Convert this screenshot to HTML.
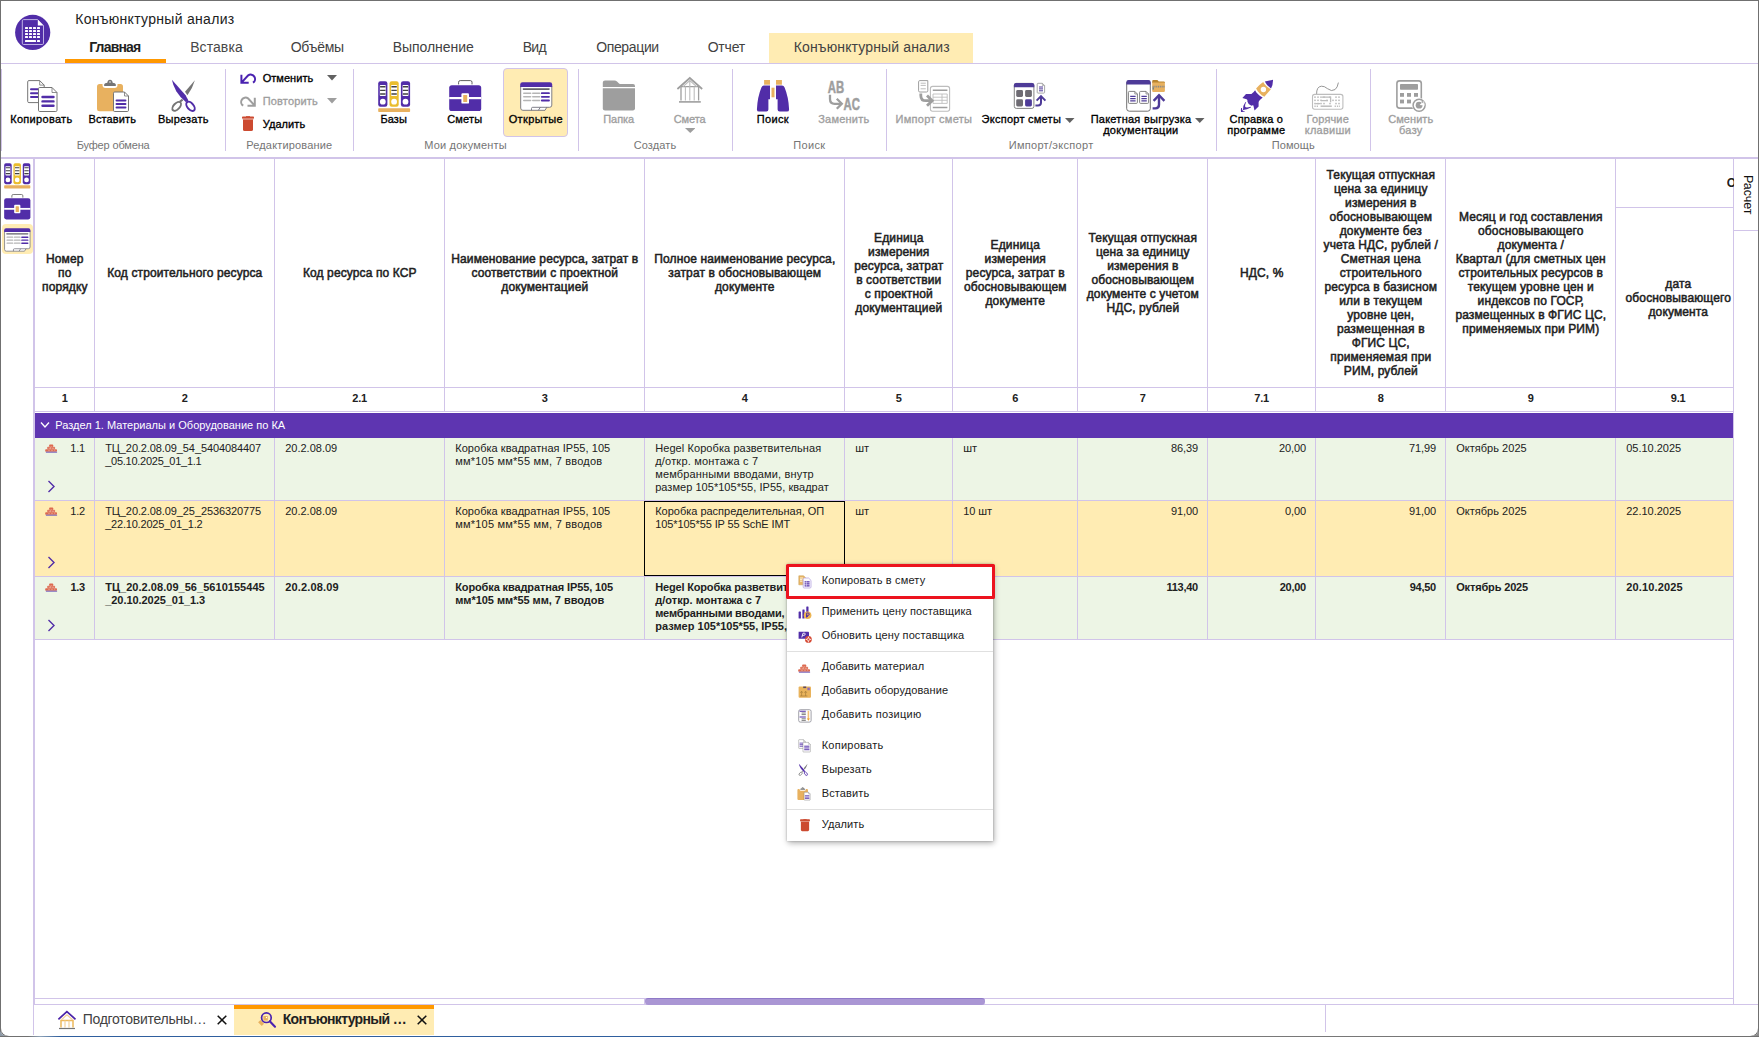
<!DOCTYPE html>
<html lang="ru"><head><meta charset="utf-8"><title>Конъюнктурный анализ</title><style>
html,body{margin:0;padding:0}
body{width:1759px;height:1037px;overflow:hidden;background:#fff;position:relative;font-family:"Liberation Sans",sans-serif;color:#212121}
.a{position:absolute}
.t{white-space:pre}
.hc{position:absolute;display:flex;align-items:center;justify-content:center;text-align:center;font-weight:400;-webkit-text-stroke:0.5px #212121;font-size:12px;line-height:14px;letter-spacing:0.12px;color:#212121;white-space:nowrap;padding-left:0.6px;box-sizing:border-box}
.c{position:absolute;font-size:11px;line-height:13px;white-space:nowrap;color:#212121}
.b{font-weight:700;letter-spacing:-0.2px}
</style></head><body>
<div class="a" style="left:0px;top:0px;width:1759px;height:1px;background:#707070"></div>
<div class="a" style="left:0px;top:0px;width:1px;height:1037px;background:#707070"></div>
<div class="a" style="left:1758px;top:0px;width:1px;height:1037px;background:#707070"></div>
<div class="a t" style="left:75.2px;top:10.15px;font-size:14px;line-height:18px;color:#212121;letter-spacing:0.297px;">Конъюнктурный анализ</div>
<div class="a" style="left:769px;top:33px;width:204px;height:30px;background:#FFECB3"></div>
<div class="a t" style="left:89.2px;top:38.15px;font-size:14px;line-height:18px;color:#212121;font-weight:700;letter-spacing:-0.823px;">Главная</div>
<div class="a t" style="left:190.2px;top:38.15px;font-size:14px;line-height:18px;color:#484848;letter-spacing:0.076px;">Вставка</div>
<div class="a t" style="left:290.7px;top:38.15px;font-size:14px;line-height:18px;color:#424242;letter-spacing:-0.234px;">Объёмы</div>
<div class="a t" style="left:392.7px;top:38.15px;font-size:14px;line-height:18px;color:#424242;letter-spacing:-0.054px;">Выполнение</div>
<div class="a t" style="left:522.7px;top:38.15px;font-size:14px;line-height:18px;color:#424242;letter-spacing:-0.664px;">Вид</div>
<div class="a t" style="left:596.2px;top:38.15px;font-size:14px;line-height:18px;color:#424242;letter-spacing:-0.357px;">Операции</div>
<div class="a t" style="left:707.7px;top:38.15px;font-size:14px;line-height:18px;color:#424242;letter-spacing:-0.211px;">Отчет</div>
<div class="a t" style="left:793.7px;top:38.15px;font-size:14px;line-height:18px;color:#424242;letter-spacing:0.139px;">Конъюнктурный анализ</div>
<div class="a" style="left:1px;top:63px;width:1757px;height:1px;background:#D1C4E9"></div>
<div class="a" style="left:65px;top:59px;width:101px;height:4px;background:#FF9800"></div>
<div class="a" style="left:1px;top:69px;width:1px;height:82px;background:#D1C4E9"></div>
<div class="a" style="left:225px;top:69px;width:1px;height:82px;background:#D1C4E9"></div>
<div class="a" style="left:353px;top:69px;width:1px;height:82px;background:#D1C4E9"></div>
<div class="a" style="left:578px;top:69px;width:1px;height:82px;background:#D1C4E9"></div>
<div class="a" style="left:732px;top:69px;width:1px;height:82px;background:#D1C4E9"></div>
<div class="a" style="left:886px;top:69px;width:1px;height:82px;background:#D1C4E9"></div>
<div class="a" style="left:1216px;top:69px;width:1px;height:82px;background:#D1C4E9"></div>
<div class="a" style="left:1370px;top:69px;width:1px;height:82px;background:#D1C4E9"></div>
<div class="a" style="left:1px;top:157px;width:1757px;height:2px;background:#D1C4E9"></div>
<div class="a t" style="left:10.2px;top:112.19px;font-size:11px;line-height:14px;color:#000;-webkit-text-stroke:0.32px #000;letter-spacing:0.307px;">Копировать</div>
<div class="a t" style="left:88.45px;top:112.19px;font-size:11px;line-height:14px;color:#000;-webkit-text-stroke:0.32px #000;letter-spacing:0.123px;">Вставить</div>
<div class="a t" style="left:157.95px;top:112.19px;font-size:11px;line-height:14px;color:#000;-webkit-text-stroke:0.32px #000;letter-spacing:0.223px;">Вырезать</div>
<div class="a t" style="left:76.7px;top:138.19px;font-size:11px;line-height:14px;color:#757575;letter-spacing:-0.159px;">Буфер обмена</div>
<div class="a t" style="left:262.7px;top:71.19px;font-size:11px;line-height:14px;color:#000;-webkit-text-stroke:0.32px #000;letter-spacing:0.033px;">Отменить</div>
<div class="a t" style="left:262.7px;top:94.19px;font-size:11px;line-height:14px;color:#9E9E9E;-webkit-text-stroke:0.32px #9E9E9E;letter-spacing:0.162px;">Повторить</div>
<div class="a t" style="left:262.7px;top:117.19px;font-size:11px;line-height:14px;color:#000;-webkit-text-stroke:0.32px #000;letter-spacing:0.083px;">Удалить</div>
<div class="a t" style="left:246.2px;top:138.19px;font-size:11px;line-height:14px;color:#757575;letter-spacing:0.169px;">Редактирование</div>
<div class="a" style="left:503px;top:68px;width:65px;height:68.6px;background:#FFECB3;border:1px solid #D1C4E9;border-radius:4px;box-sizing:border-box"></div>
<div class="a t" style="left:380.45px;top:112.19px;font-size:11px;line-height:14px;color:#000;-webkit-text-stroke:0.32px #000;letter-spacing:0.109px;">Базы</div>
<div class="a t" style="left:447.2px;top:112.19px;font-size:11px;line-height:14px;color:#000;-webkit-text-stroke:0.32px #000;letter-spacing:0.199px;">Сметы</div>
<div class="a t" style="left:508.7px;top:112.19px;font-size:11px;line-height:14px;color:#000;-webkit-text-stroke:0.32px #000;letter-spacing:0.357px;">Открытые</div>
<div class="a t" style="left:424.2px;top:138.19px;font-size:11px;line-height:14px;color:#757575;letter-spacing:0.195px;">Мои документы</div>
<div class="a t" style="left:603.2px;top:112.19px;font-size:11px;line-height:14px;color:#9E9E9E;-webkit-text-stroke:0.32px #9E9E9E;letter-spacing:-0.039px;">Папка</div>
<div class="a t" style="left:673.7px;top:112.19px;font-size:11px;line-height:14px;color:#9E9E9E;-webkit-text-stroke:0.32px #9E9E9E;letter-spacing:-0.074px;">Смета</div>
<div class="a t" style="left:633.7px;top:138.19px;font-size:11px;line-height:14px;color:#757575;letter-spacing:0.115px;">Создать</div>
<div class="a t" style="left:756.7px;top:112.19px;font-size:11px;line-height:14px;color:#000;-webkit-text-stroke:0.32px #000;letter-spacing:0.379px;">Поиск</div>
<div class="a t" style="left:818.2px;top:112.19px;font-size:11px;line-height:14px;color:#9E9E9E;-webkit-text-stroke:0.32px #9E9E9E;letter-spacing:0.223px;">Заменить</div>
<div class="a t" style="left:793.2px;top:138.19px;font-size:11px;line-height:14px;color:#757575;letter-spacing:0.379px;">Поиск</div>
<div class="a t" style="left:895.45px;top:112.19px;font-size:11px;line-height:14px;color:#9E9E9E;-webkit-text-stroke:0.32px #9E9E9E;letter-spacing:0.293px;">Импорт сметы</div>
<div class="a t" style="left:981.6px;top:112.19px;font-size:11px;line-height:14px;color:#000;-webkit-text-stroke:0.32px #000;letter-spacing:0.254px;">Экспорт сметы</div>
<div class="a t" style="left:1090.65px;top:112.19px;font-size:11px;line-height:14px;color:#000;-webkit-text-stroke:0.32px #000;letter-spacing:0.254px;">Пакетная выгрузка</div>
<div class="a t" style="left:1103.2px;top:123.19px;font-size:11px;line-height:14px;color:#000;-webkit-text-stroke:0.32px #000;letter-spacing:0.251px;">документации</div>
<div class="a t" style="left:1008.7px;top:138.19px;font-size:11px;line-height:14px;color:#757575;letter-spacing:0.303px;">Импорт/экспорт</div>
<div class="a t" style="left:1229.6px;top:112.19px;font-size:11px;line-height:14px;color:#000;-webkit-text-stroke:0.32px #000;letter-spacing:0.109px;">Справка о</div>
<div class="a t" style="left:1227.2px;top:123.19px;font-size:11px;line-height:14px;color:#000;-webkit-text-stroke:0.32px #000;letter-spacing:0.289px;">программе</div>
<div class="a t" style="left:1306.6px;top:112.19px;font-size:11px;line-height:14px;color:#9E9E9E;-webkit-text-stroke:0.32px #9E9E9E;letter-spacing:0.151px;">Горячие</div>
<div class="a t" style="left:1304.7px;top:123.19px;font-size:11px;line-height:14px;color:#9E9E9E;-webkit-text-stroke:0.32px #9E9E9E;letter-spacing:0.260px;">клавиши</div>
<div class="a t" style="left:1271.7px;top:138.19px;font-size:11px;line-height:14px;color:#757575;letter-spacing:0.100px;">Помощь</div>
<div class="a t" style="left:1388.2px;top:112.19px;font-size:11px;line-height:14px;color:#9E9E9E;-webkit-text-stroke:0.32px #9E9E9E;letter-spacing:0.062px;">Сменить</div>
<div class="a t" style="left:1399.05px;top:123.19px;font-size:11px;line-height:14px;color:#9E9E9E;-webkit-text-stroke:0.32px #9E9E9E;letter-spacing:0.277px;">базу</div>
<svg class="a" style="left:327px;top:75px;" width="10" height="5.5" viewBox="0 0 10 5.5"><path d="M0 0H10L5.0 5.5Z" fill="#616161"/></svg>
<svg class="a" style="left:327px;top:98px;" width="10" height="5.5" viewBox="0 0 10 5.5"><path d="M0 0H10L5.0 5.5Z" fill="#9E9E9E"/></svg>
<svg class="a" style="left:684.5px;top:128px;" width="10.5" height="5" viewBox="0 0 10.5 5"><path d="M0 0H10.5L5.25 5Z" fill="#9E9E9E"/></svg>
<svg class="a" style="left:1065px;top:117.5px;" width="9.5" height="5" viewBox="0 0 9.5 5"><path d="M0 0H9.5L4.75 5Z" fill="#616161"/></svg>
<svg class="a" style="left:1195px;top:117.5px;" width="9.5" height="5" viewBox="0 0 9.5 5"><path d="M0 0H9.5L4.75 5Z" fill="#616161"/></svg>
<svg class="a" style="left:14px;top:14px;" width="38" height="38" viewBox="0 0 38 38"><circle cx="18.7" cy="18.4" r="17.6" fill="#512DA8"/>
<path d="M9.6 5.6H23.6L29.5 11.4V29.2Q29.5 30.5 28.2 30.5H9.6Q8.3 30.5 8.3 29.2V6.9Q8.3 5.6 9.6 5.6Z" fill="none" stroke="#BFB2E4" stroke-width="1" stroke-linejoin="round"/>
<path d="M23.8 5.8L29.4 11.4H23.8Z" fill="#fff"/>
<g fill="#fff"><rect x="11" y="13" width="3" height="2" rx="0.5"/><rect x="11" y="16" width="3" height="2" rx="0.5"/><rect x="11" y="19" width="3" height="2" rx="0.5"/><rect x="11" y="22" width="3" height="2" rx="0.5"/><rect x="15" y="13" width="3" height="2" rx="0.5"/><rect x="15" y="16" width="3" height="2" rx="0.5"/><rect x="15" y="19" width="3" height="2" rx="0.5"/><rect x="15" y="22" width="3" height="2" rx="0.5"/><rect x="19" y="13" width="3" height="2" rx="0.5"/><rect x="19" y="16" width="3" height="2" rx="0.5"/><rect x="19" y="19" width="3" height="2" rx="0.5"/><rect x="19" y="22" width="3" height="2" rx="0.5"/><rect x="23" y="13" width="3" height="2" rx="0.5"/><rect x="23" y="16" width="3" height="2" rx="0.5"/><rect x="23" y="19" width="3" height="2" rx="0.5"/><rect x="23" y="22" width="3" height="2" rx="0.5"/><rect x="11" y="26" width="11" height="2" rx="0.5"/><rect x="23" y="26" width="3" height="2" rx="0.5"/></g></svg>
<svg class="a" style="left:26px;top:79px;" width="34" height="35" viewBox="0 0 34 35"><path d="M2.9 1.6H13.7L18.2 6.1V22.400000000000002Q18.2 23.6 17.0 23.6H2.9Q1.7 23.6 1.7 22.400000000000002V2.8Q1.7 1.6 2.9 1.6Z" fill="#fff" stroke="#757575" stroke-width="1"/><path d="M13.7 1.6V6.1H18.2" fill="none" stroke="#757575" stroke-width="0.8"/><path d="M5 10.3H12M5 14.2H12M5 18.1H12" stroke="#512DA8" stroke-width="2" stroke-linecap="round"/><path d="M13.7 8.5H26.0L31.0 13.5V31.3Q31.0 32.5 29.8 32.5H13.7Q12.5 32.5 12.5 31.3V9.7Q12.5 8.5 13.7 8.5Z" fill="#fff" stroke="#757575" stroke-width="1"/><path d="M26.0 8.5V13.5H31.0" fill="none" stroke="#757575" stroke-width="0.8"/><path d="M16.5 18H27.5M16.5 22.4H27.5M16.5 26.8H27.5" stroke="#512DA8" stroke-width="2.4" stroke-linecap="round"/></svg>
<svg class="a" style="left:96px;top:79px;" width="34" height="35" viewBox="0 0 34 35"><rect x="1" y="5" width="26" height="27.2" rx="2.5" fill="#E8B15F"/>
<path d="M6.5 4.5H21.5V6Q21.5 9 18.5 9H9.5Q6.5 9 6.5 6Z" fill="#fff"/>
<path d="M8.2 6.9Q7.6 4.2 10.4 3.9L11.3 3.8Q11.7 0.8 14 0.8Q16.3 0.8 16.7 3.8L17.6 3.9Q20.4 4.2 19.8 6.9Z" fill="#757575"/><circle cx="14" cy="2.9" r="0.75" fill="#fff"/><path d="M18.7 13H28.5L32.5 17V31.3Q32.5 32.5 31.3 32.5H18.7Q17.5 32.5 17.5 31.3V14.2Q17.5 13 18.7 13Z" fill="#fff" stroke="#757575" stroke-width="1"/><path d="M28.5 13V17H32.5" fill="none" stroke="#757575" stroke-width="0.8"/><path d="M20.5 21.5H29.5M20.5 25H29.5M20.5 28.5H29.5" stroke="#512DA8" stroke-width="1.9" stroke-linecap="round"/></svg>
<svg class="a" style="left:168px;top:78px;" width="32" height="36" viewBox="0 0 32 36"><path d="M26.9 2.2L17 13.7L19.4 17.3Q24.8 9.8 26.9 2.2Z" fill="#757575"/>
<path d="M14.6 21.6L12 23.6" stroke="#757575" stroke-width="2"/>
<ellipse cx="8.7" cy="28.3" rx="3" ry="5.4" transform="rotate(43 8.7 28.3)" fill="none" stroke="#757575" stroke-width="1.9"/>
<path d="M3.9 1.8L17.6 17.3L20.4 22.4L18 24.2Q12 19.5 8.3 13.3Q5 7.5 3.9 1.8Z" fill="#512DA8"/>
<ellipse cx="22.5" cy="28.3" rx="3.1" ry="5.4" transform="rotate(-40 22.5 28.3)" fill="none" stroke="#512DA8" stroke-width="2"/></svg>
<svg class="a" style="left:239.5px;top:73.3px;" width="18" height="12" viewBox="0 0 18 12"><path d="M1.4 1.8V9.7H8.7M1.7 9.4L8.2 2.3A4.3 4.3 0 1 1 13 9.7" fill="none" stroke="#4A22B0" stroke-width="2"/></svg>
<svg class="a" style="left:239.5px;top:96.3px;" width="18" height="12" viewBox="0 0 18 12"><g transform="translate(16.2 0) scale(-1 1)"><path d="M1.4 1.8V9.7H8.7M1.7 9.4L8.2 2.3A4.3 4.3 0 1 1 13 9.7" fill="none" stroke="#9E9E9E" stroke-width="2"/></g></svg>
<svg class="a" style="left:241px;top:115px;" width="14" height="17" viewBox="0 0 14 17"><path d="M5 1.2H9V2.2H5Z" fill="#CC4A30"/><rect x="1" y="1.6" width="12" height="2.2" rx="0.8" fill="#CC4A30"/>
<rect x="1.6" y="3.6" width="10.8" height="1" fill="#E59A88"/>
<path d="M2 4.5H12V14.4Q12 16 10.4 16H3.6Q2 16 2 14.4Z" fill="#CC4A30"/></svg>
<svg class="a" style="left:377.8px;top:80.8px;" width="33.0" height="32.0" viewBox="0 0 33 32"><rect x="0.2" y="0.2" width="9.2" height="25.6" rx="2.2" fill="#512DA8"/><rect x="1.8" y="3.9" width="6" height="11.2" rx="0.8" fill="#fff"/><path d="M2.1 5.8h5.4M2.1 9.4h5.4M2.1 13h5.4" stroke="#424242" stroke-width="1.4"/><circle cx="4.8" cy="20.7" r="2.9" fill="#fff"/><rect x="11.5" y="0.2" width="9.2" height="25.6" rx="2.2" fill="#EABD2D"/><rect x="13.1" y="3.9" width="6" height="11.2" rx="0.8" fill="#fff"/><path d="M13.4 5.8h5.4M13.4 9.4h5.4M13.4 13h5.4" stroke="#424242" stroke-width="1.4"/><circle cx="16.1" cy="20.7" r="2.9" fill="#fff"/><rect x="22.9" y="0.2" width="9.2" height="25.6" rx="2.2" fill="#512DA8"/><rect x="24.5" y="3.9" width="6" height="11.2" rx="0.8" fill="#fff"/><path d="M24.799999999999997 5.8h5.4M24.799999999999997 9.4h5.4M24.799999999999997 13h5.4" stroke="#424242" stroke-width="1.4"/><circle cx="27.5" cy="20.7" r="2.9" fill="#fff"/><rect x="0.2" y="27.2" width="31.9" height="3.8" rx="0.8" fill="#E8B15F"/></svg>
<svg class="a" style="left:3.8px;top:162.9px;" width="27.06" height="26.24" viewBox="0 0 33 32"><rect x="0.2" y="0.2" width="9.2" height="25.6" rx="2.2" fill="#512DA8"/><rect x="1.8" y="3.9" width="6" height="11.2" rx="0.8" fill="#fff"/><path d="M2.1 5.8h5.4M2.1 9.4h5.4M2.1 13h5.4" stroke="#424242" stroke-width="1.4"/><circle cx="4.8" cy="20.7" r="2.9" fill="#fff"/><rect x="11.5" y="0.2" width="9.2" height="25.6" rx="2.2" fill="#EABD2D"/><rect x="13.1" y="3.9" width="6" height="11.2" rx="0.8" fill="#fff"/><path d="M13.4 5.8h5.4M13.4 9.4h5.4M13.4 13h5.4" stroke="#424242" stroke-width="1.4"/><circle cx="16.1" cy="20.7" r="2.9" fill="#fff"/><rect x="22.9" y="0.2" width="9.2" height="25.6" rx="2.2" fill="#512DA8"/><rect x="24.5" y="3.9" width="6" height="11.2" rx="0.8" fill="#fff"/><path d="M24.799999999999997 5.8h5.4M24.799999999999997 9.4h5.4M24.799999999999997 13h5.4" stroke="#424242" stroke-width="1.4"/><circle cx="27.5" cy="20.7" r="2.9" fill="#fff"/><rect x="0.2" y="27.2" width="31.9" height="3.8" rx="0.8" fill="#E8B15F"/></svg>
<svg class="a" style="left:448.8px;top:79.8px;" width="33.0" height="32.0" viewBox="0 0 33 32"><path d="M9.6 4.4V2.2Q9.6 0.6 11.2 0.6H21.4Q23 0.6 23 2.2V4.4" fill="none" stroke="#616161" stroke-width="1"/>
<rect x="0.2" y="5.2" width="32" height="25.8" rx="2.6" fill="#512DA8"/>
<rect x="0.2" y="17" width="32" height="2.2" fill="#fff"/>
<rect x="12.4" y="13.2" width="7.6" height="10.4" rx="1.2" fill="#fff"/>
<rect x="14.2" y="15" width="4" height="7" rx="0.5" fill="#E8B15F"/></svg>
<svg class="a" style="left:3.8px;top:193.6px;" width="27.06" height="26.24" viewBox="0 0 33 32"><path d="M9.6 4.4V2.2Q9.6 0.6 11.2 0.6H21.4Q23 0.6 23 2.2V4.4" fill="none" stroke="#616161" stroke-width="1"/>
<rect x="0.2" y="5.2" width="32" height="25.8" rx="2.6" fill="#512DA8"/>
<rect x="0.2" y="17" width="32" height="2.2" fill="#fff"/>
<rect x="12.4" y="13.2" width="7.6" height="10.4" rx="1.2" fill="#fff"/>
<rect x="14.2" y="15" width="4" height="7" rx="0.5" fill="#E8B15F"/></svg>
<div class="a" style="left:2px;top:224px;width:30.5px;height:30px;background:#FFECB3;border-radius:4px"></div>
<svg class="a" style="left:519.8px;top:82px;" width="33.0" height="30.0" viewBox="0 0 33 30"><path d="M0.7 4V26.1Q0.7 28.3 2.9 28.3H25L26.8 25.3H29.6Q31.8 25.3 31.8 23.1V4Z" fill="#fff" stroke="#70707A" stroke-width="0.9"/>
<path d="M0.2 5V2.6Q0.2 0.3 2.5 0.3H29.9Q32.2 0.3 32.2 2.6V5Z" fill="#512DA8"/>
<path d="M11.5 28.3V26.5Q11.5 25.3 12.7 25.3H27M20.3 25.3L18.4 28.3" fill="none" stroke="#70707A" stroke-width="0.9"/>
<path d="M3.4 7.1H29" stroke="#616168" stroke-width="1.6" stroke-linecap="round"/>
<path d="M3.8 11.2h6.8M12.8 11.2h6.8M3.8 14.8h6.8M12.8 14.8h6.8M3.8 18.5h6.8M12.8 18.5h6.8" stroke="#B5B5B5" stroke-width="1.6" stroke-linecap="round"/>
<path d="M21.8 11.2h7.2M21.8 14.8h7.2M21.8 18.5h7.2" stroke="#512DA8" stroke-width="1.8" stroke-linecap="round"/></svg>
<svg class="a" style="left:3.8px;top:228px;" width="27.06" height="24.6" viewBox="0 0 33 30"><path d="M0.7 4V26.1Q0.7 28.3 2.9 28.3H25L26.8 25.3H29.6Q31.8 25.3 31.8 23.1V4Z" fill="#fff" stroke="#70707A" stroke-width="0.9"/>
<path d="M0.2 5V2.6Q0.2 0.3 2.5 0.3H29.9Q32.2 0.3 32.2 2.6V5Z" fill="#512DA8"/>
<path d="M11.5 28.3V26.5Q11.5 25.3 12.7 25.3H27M20.3 25.3L18.4 28.3" fill="none" stroke="#70707A" stroke-width="0.9"/>
<path d="M3.4 7.1H29" stroke="#616168" stroke-width="1.6" stroke-linecap="round"/>
<path d="M3.8 11.2h6.8M12.8 11.2h6.8M3.8 14.8h6.8M12.8 14.8h6.8M3.8 18.5h6.8M12.8 18.5h6.8" stroke="#B5B5B5" stroke-width="1.6" stroke-linecap="round"/>
<path d="M21.8 11.2h7.2M21.8 14.8h7.2M21.8 18.5h7.2" stroke="#512DA8" stroke-width="1.8" stroke-linecap="round"/></svg>
<svg class="a" style="left:602px;top:80px;" width="34" height="31" viewBox="0 0 34 31"><path d="M0.8 2.6Q0.8 0.4 3 0.4H12.5Q14 0.4 15 1.4L17 3.4Q17.8 4 19 4H31Q33 4 33 6V7H0.8Z" fill="#9E9E9E"/><path d="M0.8 8.2H33V28.2Q33 30.4 30.8 30.4H3Q0.8 30.4 0.8 28.2Z" fill="#9E9E9E"/></svg>
<svg class="a" style="left:676px;top:76px;" width="28" height="28" viewBox="0 0 28 28"><path d="M1.4 13L13.8 2L26.2 13" fill="none" stroke="#9E9E9E" stroke-width="1.7"/>
<path d="M5 10.4V24.4M22.6 10.4V24.4M4.6 10.6H23" fill="none" stroke="#9E9E9E" stroke-width="1.3"/>
<path d="M9.4 10.6V24.4M13.8 5V24.4M18.2 10.6V24.4M13.8 4.5L7 10.6M13.8 4.5L20.6 10.6" fill="none" stroke="#BDBDBD" stroke-width="1.1"/>
<path d="M3 25.9H24.8" stroke="#9E9E9E" stroke-width="1.6"/></svg>
<svg class="a" style="left:756px;top:79px;" width="34" height="34" viewBox="0 0 34 34"><rect x="8.1" y="1" width="5.9" height="4.7" fill="#E8B15F"/><rect x="20" y="1" width="5.9" height="4.7" fill="#E8B15F"/>
<rect x="15.5" y="8.7" width="3" height="9.6" fill="#E8B15F"/>
<path d="M8 6.6H14V20.2H12.4V30.6Q12.4 32.6 10.4 32.6H3Q0.9 32.6 0.9 30.4Q1.5 18 5.4 8.6Q6.2 6.6 8 6.6Z" fill="#512DA8"/>
<path d="M26 6.6H20V20.2H21.6V30.6Q21.6 32.6 23.6 32.6H31Q33.1 32.6 33.1 30.4Q32.5 18 28.6 8.6Q27.8 6.6 26 6.6Z" fill="#512DA8"/></svg>
<svg class="a" style="left:826px;top:80px;" width="36" height="32" viewBox="0 0 36 32"><text transform="translate(1.8 12.7) scale(0.7 1)" font-family="Liberation Sans, sans-serif" font-weight="700" font-size="16.2" fill="#9E9E9E" stroke="#9E9E9E" stroke-width="0.5">AB</text>
<text transform="translate(17.6 29.6) scale(0.7 1)" font-family="Liberation Sans, sans-serif" font-weight="700" font-size="16.2" fill="#9E9E9E" stroke="#9E9E9E" stroke-width="0.5">AC</text>
<path d="M4 14.8V19Q4 23.8 8.6 23.8H15" fill="none" stroke="#9E9E9E" stroke-width="2.3"/><path d="M10.8 18.8L15.8 23.8L10.8 28.8" fill="none" stroke="#9E9E9E" stroke-width="2.3"/></svg>
<svg class="a" style="left:917px;top:79px;" width="34" height="34" viewBox="0 0 34 34"><path d="M2.8 1.6H10.79L10.799999999999999 1.61V11.8Q10.799999999999999 13.0 9.6 13.0H2.8Q1.6 13.0 1.6 11.8V2.8Q1.6 1.6 2.8 1.6Z" fill="#fff" stroke="#9E9E9E" stroke-width="1"/><path d="M10.79 1.6V1.61H10.799999999999999" fill="none" stroke="#9E9E9E" stroke-width="0.8"/><path d="M3.6 4.2H8.8M3.6 6.4H8.8M3.6 9.8H8.8" stroke="#BDBDBD" stroke-width="1"/>
<rect x="13.4" y="7.4" width="19.2" height="24.8" rx="2.2" fill="#fff" stroke="#BDBDBD" stroke-width="1.1"/>
<path d="M15.8 11.2H30.4M15.8 28.6H30.4" stroke="#9E9E9E" stroke-width="1.5"/>
<path d="M16 15H30.2V24.4H16ZM16 18.2H30.2M16 21.3H30.2M25 15V24.4" fill="none" stroke="#BDBDBD" stroke-width="0.9"/>
<path d="M3.8 14.6V16.4Q3.8 21.7 9 21.7H13.6" fill="none" stroke="#9E9E9E" stroke-width="2.8"/><path d="M10 16.6L15.2 21.7L10 26.8" fill="none" stroke="#9E9E9E" stroke-width="2.8"/></svg>
<svg class="a" style="left:1013px;top:82px;" width="34" height="28" viewBox="0 0 34 28"><rect x="1.3" y="1.4" width="19.6" height="25" rx="2" fill="#fff" stroke="#757575" stroke-width="0.9"/>
<path d="M0.9 5.2V3Q0.9 0.9 3 0.9H19.2Q21.3 0.9 21.3 3V5.2Z" fill="#4E3B98"/>
<rect x="3.2" y="8" width="6.8" height="7" rx="1.4" fill="#6E6B73"/><rect x="12.1" y="8" width="6.8" height="7" rx="1.4" fill="#6E6B73"/>
<rect x="3.2" y="17.3" width="6.8" height="7.2" rx="1.4" fill="#6E6B73"/><rect x="12.1" y="17.3" width="6.8" height="7.2" rx="1.4" fill="#4E3B98"/><path d="M25.0 1.3H29.400000000000002L31.6 3.5V10.3Q31.6 11.100000000000001 30.8 11.100000000000001H25.0Q24.2 11.100000000000001 24.2 10.3V2.1Q24.2 1.3 25.0 1.3Z" fill="#fff" stroke="#9E9E9E" stroke-width="0.9"/><path d="M29.400000000000002 1.3V3.5H31.6" fill="none" stroke="#9E9E9E" stroke-width="0.7200000000000001"/><path d="M26 5H30M26 6.9H30M26 8.8H30" stroke="#4E3B98" stroke-width="1"/>
<path d="M22.4 23.4H25Q28 23.4 28 20.4V14.4" fill="none" stroke="#4E3B98" stroke-width="2"/><path d="M23.6 18.6L28 14.1L32.4 18.6" fill="none" stroke="#4E3B98" stroke-width="2"/></svg>
<svg class="a" style="left:1125px;top:79px;" width="42" height="34" viewBox="0 0 42 34"><rect x="1.7" y="1.6" width="23.6" height="30.6" rx="2.6" fill="#fff" stroke="#616161" stroke-width="0.9"/>
<path d="M1.3 5.6V3.4Q1.3 1 3.7 1H23.3Q25.7 1 25.7 3.4V5.6Z" fill="#4E3B98"/><path d="M4.4 12.4H9.8L12.4 15.0V23.4Q12.4 24.4 11.4 24.4H4.4Q3.4 24.4 3.4 23.4V13.4Q3.4 12.4 4.4 12.4Z" fill="#fff" stroke="#757575" stroke-width="0.9"/><path d="M9.8 12.4V15.0H12.4" fill="none" stroke="#757575" stroke-width="0.7200000000000001"/><path d="M15.6 12.4H21.0L23.6 15.0V23.4Q23.6 24.4 22.6 24.4H15.6Q14.6 24.4 14.6 23.4V13.4Q14.6 12.4 15.6 12.4Z" fill="#fff" stroke="#757575" stroke-width="0.9"/><path d="M21.0 12.4V15.0H23.6" fill="none" stroke="#757575" stroke-width="0.7200000000000001"/><path d="M5.2 17.4H10.6M5.2 19.6H10.6M5.2 21.8H10.6M16.4 17.4H21.8M16.4 19.6H21.8M16.4 21.8H21.8" stroke="#4E3B98" stroke-width="1.3"/>
<path d="M27.2 2Q27.2 1 28.2 1H32.4L33.8 2.4H38.8Q39.9 2.4 39.9 3.4V4H27.2Z" fill="#B8842F"/>
<rect x="27.2" y="3.6" width="12.7" height="9.3" rx="0.8" fill="#E8B15F"/>
<path d="M27.6 7.6H39.6" stroke="#8A8A8A" stroke-width="1.6" stroke-dasharray="1.1 0.7"/><rect x="27.6" y="8.4" width="1.3" height="2.2" fill="#6A7F8C"/>
<path d="M27.6 29.4H30.4Q34 29.4 34 25.8V16.6" fill="none" stroke="#4E3B98" stroke-width="2.4"/><path d="M28.6 21.8L34 16.2L39.4 21.8" fill="none" stroke="#4E3B98" stroke-width="2.4"/></svg>
<svg class="a" style="left:1236px;top:76px;" width="40" height="38" viewBox="0 0 40 38"><path d="M37 3.8L28.8 5.6Q30.6 10 35 12.4Q37.2 8.4 37 3.8Z" fill="#512DA8"/>
<path d="M27.2 6Q29.6 10.6 34.9 13.3L28.3 20.8Q22.8 17.8 20.1 12.5Q23.4 8.6 27.2 6Z" fill="#E8B15F"/><circle cx="27.4" cy="13.5" r="2.7" fill="#fff"/>
<path d="M19.1 14.2Q20.8 18.2 26.7 21.6L23.9 23.9Q22.6 25 22.6 26.4V30.5L18.5 34.6L17.4 29.6Q16.8 29 15.4 29.7Q12.2 28.6 11.4 25.4Q11.8 23.8 10.6 23.3L6.4 22L10 18.1H15.4Q17.4 16.6 19.1 14.2Z" fill="#512DA8"/>
<path d="M9.3 26.3L10.1 26.1Q8.6 29.5 9.2 31Q10.6 32 14.7 30.7L15 31.5Q10.5 34 7 33.9Q6.6 30 9.3 26.3Z" fill="#512DA8"/>
<path d="M5.2 31.9L6 32Q5.9 33.8 6.6 34.4Q7.4 35 8.7 34.9L8.8 35.6Q6.5 36.4 5 35.9Q4.6 33.6 5.2 31.9Z" fill="#512DA8"/></svg>
<svg class="a" style="left:1311px;top:80px;" width="34" height="31" viewBox="0 0 34 31"><path d="M5.6 14.4Q5.4 6.6 10.4 6.2Q13.4 6 16.4 8.6Q20.6 12 24 9.6Q26.6 7.6 27.4 2.6" fill="none" stroke="#8A8A8A" stroke-width="0.9"/>
<rect x="1.5" y="14.4" width="30.4" height="14.8" rx="2.2" fill="#fff" stroke="#BDBDBD" stroke-width="1.1"/><rect x="3.2" y="16.4" width="1.6" height="1.5" fill="#BDBDBD"/><rect x="6.2" y="16.4" width="1.6" height="1.5" fill="#BDBDBD"/><rect x="9.2" y="16.4" width="1.6" height="1.5" fill="#BDBDBD"/><rect x="12.2" y="16.4" width="1.6" height="1.5" fill="#BDBDBD"/><rect x="18.2" y="16.4" width="1.6" height="1.5" fill="#BDBDBD"/><rect x="24.2" y="16.4" width="1.6" height="1.5" fill="#BDBDBD"/><rect x="27.2" y="16.4" width="1.6" height="1.5" fill="#BDBDBD"/><rect x="3.2" y="19.6" width="1.6" height="1.5" fill="#BDBDBD"/><rect x="6.2" y="19.6" width="1.6" height="1.5" fill="#BDBDBD"/><rect x="9.2" y="19.6" width="1.6" height="1.5" fill="#BDBDBD"/><rect x="15.2" y="19.6" width="1.6" height="1.5" fill="#BDBDBD"/><rect x="21.2" y="19.6" width="1.6" height="1.5" fill="#BDBDBD"/><rect x="24.2" y="19.6" width="1.6" height="1.5" fill="#BDBDBD"/><rect x="27.2" y="19.6" width="1.6" height="1.5" fill="#BDBDBD"/><rect x="3.2" y="22.8" width="1.6" height="1.5" fill="#BDBDBD"/><rect x="6.2" y="22.8" width="1.6" height="1.5" fill="#BDBDBD"/><rect x="9.2" y="22.8" width="1.6" height="1.5" fill="#BDBDBD"/><rect x="12.2" y="22.8" width="1.6" height="1.5" fill="#BDBDBD"/><rect x="18.2" y="22.8" width="1.6" height="1.5" fill="#BDBDBD"/><rect x="24.2" y="22.8" width="1.6" height="1.5" fill="#BDBDBD"/><rect x="27.2" y="22.8" width="1.6" height="1.5" fill="#BDBDBD"/><path d="M11 17.2H19.6V22.2M10 20.6H17M4.4 23.6H9" stroke="#BDBDBD" stroke-width="1.3" fill="none"/>
<path d="M9.6 26.2H20.8" stroke="#BDBDBD" stroke-width="1.5"/><path d="M3.4 26.2H7M23.6 26.2H29" stroke="#BDBDBD" stroke-width="1.4" stroke-dasharray="1.3 1"/></svg>
<svg class="a" style="left:1395px;top:79px;" width="34" height="36" viewBox="0 0 34 36"><rect x="1.9" y="1.9" width="24.4" height="27.2" rx="2.6" fill="#fff" stroke="#9E9E9E" stroke-width="1.6"/>
<rect x="5" y="5" width="18" height="5.8" rx="0.8" fill="#9E9E9E"/>
<g fill="#9E9E9E"><rect x="5" y="14" width="4" height="3.8"/><rect x="12" y="14" width="4" height="3.8"/><rect x="19" y="14" width="4" height="3.8"/>
<rect x="5" y="20.6" width="4" height="3.8"/><rect x="12" y="20.6" width="4" height="3.8"/></g>
<circle cx="24.1" cy="26.2" r="7.2" fill="#fff"/><circle cx="24.1" cy="26.2" r="6" fill="none" stroke="#9E9E9E" stroke-width="1.5"/>
<circle cx="24.1" cy="26.2" r="3.4" fill="#9E9E9E"/><path d="M24.6 26L29 21.6L29.6 26.4Z" fill="#fff"/><path d="M26.2 22.4L28.6 22L28.2 24.4Z" fill="#9E9E9E"/></svg>
<div class="a" style="left:35px;top:413px;width:1698px;height:25px;background:#5E35B1"></div>
<div class="a" style="left:35px;top:438px;width:1698px;height:62px;background:#EDF5E5"></div>
<div class="a" style="left:35px;top:501px;width:1698px;height:75px;background:#FFECB3"></div>
<div class="a" style="left:35px;top:577px;width:1698px;height:62px;background:#EDF5E5"></div>
<div class="a" style="left:33px;top:159px;width:2px;height:846px;background:#D1C4E9"></div>
<div class="a" style="left:33px;top:1005px;width:1px;height:30px;background:#D1C4E9"></div>
<div class="a" style="left:94px;top:159px;width:1px;height:253px;background:#D1C4E9"></div>
<div class="a" style="left:94px;top:438px;width:1px;height:202px;background:#D1C4E9"></div>
<div class="a" style="left:274px;top:159px;width:1px;height:253px;background:#D1C4E9"></div>
<div class="a" style="left:274px;top:438px;width:1px;height:202px;background:#D1C4E9"></div>
<div class="a" style="left:444px;top:159px;width:1px;height:253px;background:#D1C4E9"></div>
<div class="a" style="left:444px;top:438px;width:1px;height:202px;background:#D1C4E9"></div>
<div class="a" style="left:644px;top:159px;width:1px;height:253px;background:#D1C4E9"></div>
<div class="a" style="left:644px;top:438px;width:1px;height:202px;background:#D1C4E9"></div>
<div class="a" style="left:844px;top:159px;width:1px;height:253px;background:#D1C4E9"></div>
<div class="a" style="left:844px;top:438px;width:1px;height:202px;background:#D1C4E9"></div>
<div class="a" style="left:952px;top:159px;width:1px;height:253px;background:#D1C4E9"></div>
<div class="a" style="left:952px;top:438px;width:1px;height:202px;background:#D1C4E9"></div>
<div class="a" style="left:1077px;top:159px;width:1px;height:253px;background:#D1C4E9"></div>
<div class="a" style="left:1077px;top:438px;width:1px;height:202px;background:#D1C4E9"></div>
<div class="a" style="left:1207px;top:159px;width:1px;height:253px;background:#D1C4E9"></div>
<div class="a" style="left:1207px;top:438px;width:1px;height:202px;background:#D1C4E9"></div>
<div class="a" style="left:1315px;top:159px;width:1px;height:253px;background:#D1C4E9"></div>
<div class="a" style="left:1315px;top:438px;width:1px;height:202px;background:#D1C4E9"></div>
<div class="a" style="left:1445px;top:159px;width:1px;height:253px;background:#D1C4E9"></div>
<div class="a" style="left:1445px;top:438px;width:1px;height:202px;background:#D1C4E9"></div>
<div class="a" style="left:1615px;top:159px;width:1px;height:253px;background:#D1C4E9"></div>
<div class="a" style="left:1615px;top:438px;width:1px;height:202px;background:#D1C4E9"></div>
<div class="a" style="left:1733px;top:159px;width:1px;height:846px;background:#D1C4E9"></div>
<div class="a" style="left:35px;top:387px;width:1698px;height:1px;background:#D1C4E9"></div>
<div class="a" style="left:35px;top:411px;width:1698px;height:1px;background:#D1C4E9"></div>
<div class="a" style="left:1616px;top:207px;width:117px;height:1px;background:#D1C4E9"></div>
<div class="a" style="left:35px;top:500px;width:1698px;height:1px;background:#D1C4E9"></div>
<div class="a" style="left:35px;top:576px;width:1698px;height:1px;background:#D1C4E9"></div>
<div class="a" style="left:35px;top:639px;width:1698px;height:1px;background:#D1C4E9"></div>
<div class="hc" style="left:35px;top:159px;width:59px;height:228px">Номер<br>по<br>порядку</div>
<div class="hc" style="left:95px;top:159px;width:179px;height:228px">Код строительного ресурса</div>
<div class="hc" style="left:275px;top:159px;width:169px;height:228px">Код ресурса по КСР</div>
<div class="hc" style="left:445px;top:159px;width:199px;height:228px">Наименование ресурса, затрат в<br>соответствии с проектной<br>документацией</div>
<div class="hc" style="left:645px;top:159px;width:199px;height:228px">Полное наименование ресурса,<br>затрат в обосновывающем<br>документе</div>
<div class="hc" style="left:845px;top:159px;width:107px;height:228px">Единица<br>измерения<br>ресурса, затрат<br>в соответствии<br>с проектной<br>документацией</div>
<div class="hc" style="left:953px;top:159px;width:124px;height:228px">Единица<br>измерения<br>ресурса, затрат в<br>обосновывающем<br>документе</div>
<div class="hc" style="left:1078px;top:159px;width:129px;height:228px">Текущая отпускная<br>цена за единицу<br>измерения в<br>обосновывающем<br>документе с учетом<br>НДС, рублей</div>
<div class="hc" style="left:1208px;top:159px;width:107px;height:228px">НДС, %</div>
<div class="hc" style="left:1316px;top:159px;width:129px;height:228px">Текущая отпускная<br>цена за единицу<br>измерения в<br>обосновывающем<br>документе без<br>учета НДС, рублей /<br>Сметная цена<br>строительного<br>ресурса в базисном<br>или в текущем<br>уровне цен,<br>размещенная в<br>ФГИС ЦС,<br>применяемая при<br>РИМ, рублей</div>
<div class="hc" style="left:1446px;top:159px;width:169px;height:228px">Месяц и год составления<br>обосновывающего<br>документа /<br>Квартал (для сметных цен<br>строительных ресурсов в<br>текущем уровне цен и<br>индексов по ГОСР,<br>размещенных в ФГИС ЦС,<br>применяемых при РИМ)</div>
<div class="hc" style="left:1616px;top:207px;width:124px;height:181px;">дата<br>обосновывающего<br>документа</div>
<div class="a t" style="left:1726.7px;top:175.34px;font-size:12px;line-height:16px;color:#212121;font-weight:700;clip-path:inset(0 2px 0 0)">О</div>
<div class="a t" style="left:61.64px;top:391.19px;font-size:11px;line-height:14px;color:#212121;font-weight:700;letter-spacing:-0.368px;">1</div>
<div class="a t" style="left:181.64px;top:391.19px;font-size:11px;line-height:14px;color:#212121;font-weight:700;letter-spacing:-0.368px;">2</div>
<div class="a t" style="left:352.36px;top:391.19px;font-size:11px;line-height:14px;color:#212121;font-weight:700;letter-spacing:-0.306px;">2.1</div>
<div class="a t" style="left:541.64px;top:391.19px;font-size:11px;line-height:14px;color:#212121;font-weight:700;letter-spacing:-0.368px;">3</div>
<div class="a t" style="left:741.64px;top:391.19px;font-size:11px;line-height:14px;color:#212121;font-weight:700;letter-spacing:-0.368px;">4</div>
<div class="a t" style="left:895.64px;top:391.19px;font-size:11px;line-height:14px;color:#212121;font-weight:700;letter-spacing:-0.368px;">5</div>
<div class="a t" style="left:1012.14px;top:391.19px;font-size:11px;line-height:14px;color:#212121;font-weight:700;letter-spacing:-0.368px;">6</div>
<div class="a t" style="left:1139.64px;top:391.19px;font-size:11px;line-height:14px;color:#212121;font-weight:700;letter-spacing:-0.368px;">7</div>
<div class="a t" style="left:1254.36px;top:391.19px;font-size:11px;line-height:14px;color:#212121;font-weight:700;letter-spacing:-0.306px;">7.1</div>
<div class="a t" style="left:1377.64px;top:391.19px;font-size:11px;line-height:14px;color:#212121;font-weight:700;letter-spacing:-0.368px;">8</div>
<div class="a t" style="left:1527.64px;top:391.19px;font-size:11px;line-height:14px;color:#212121;font-weight:700;letter-spacing:-0.368px;">9</div>
<div class="a t" style="left:1670.86px;top:391.19px;font-size:11px;line-height:14px;color:#212121;font-weight:700;letter-spacing:-0.306px;">9.1</div>
<div class="a t" style="left:55.2px;top:418.19px;font-size:11px;line-height:14px;color:#fff;letter-spacing:0.012px;">Раздел 1. Материалы и Оборудование по КА</div>
<svg class="a" style="left:40px;top:421px;" width="10" height="8" viewBox="0 0 10 8"><path d="M1 1.5L5 6L9 1.5" fill="none" stroke="#fff" stroke-width="1.3"/></svg>
<div class="a t" style="left:70.21px;top:441.19px;font-size:11px;line-height:14px;color:#212121;letter-spacing:-0.153px;">1.1</div>
<svg class="a" style="left:47px;top:480px;" width="9" height="13" viewBox="0 0 9 13"><path d="M1.5 1L7 6.5L1.5 12" fill="none" stroke="#512DA8" stroke-width="1.4"/></svg>
<svg class="a" style="left:45px;top:444.4px;" width="13" height="10" viewBox="0 0 13 10"><rect x="4.2" y="0.5" width="4" height="2.4" rx="0.7" fill="#DD6A50"/><rect x="2.2" y="2.7" width="7.9" height="2.7" rx="0.8" fill="#E07A62"/><rect x="0.2" y="5.2" width="11.8" height="2.6" rx="0.8" fill="#DD6A50"/>
<path d="M5.4 3.6L6.4 2.2M4.4 4.6H5.8M7.4 4.4H8.6M3.4 6.4H4.6M6.4 6.4H7.6M9.2 6.2H10.2" stroke="#F2C4B6" stroke-width="0.7"/>
<path d="M0.9 8.2H12.1" stroke="#7C68BC" stroke-width="1.1"/></svg>
<div class="a t" style="left:105.2px;top:441.19px;font-size:11px;line-height:14px;color:#212121;letter-spacing:-0.101px;">ТЦ_20.2.08.09_54_5404084407</div>
<div class="a t" style="left:105.2px;top:454.19px;font-size:11px;line-height:14px;color:#212121;letter-spacing:-0.261px;">_05.10.2025_01_1.1</div>
<div class="a t" style="left:285.2px;top:441.19px;font-size:11px;line-height:14px;color:#212121;">20.2.08.09</div>
<div class="a t" style="left:455.2px;top:441.19px;font-size:11px;line-height:14px;color:#212121;letter-spacing:0.048px;">Коробка квадратная IP55, 105</div>
<div class="a t" style="left:455.2px;top:454.19px;font-size:11px;line-height:14px;color:#212121;letter-spacing:0.219px;">мм*105 мм*55 мм, 7 вводов</div>
<div class="a t" style="left:655.2px;top:441.19px;font-size:11px;line-height:14px;color:#212121;letter-spacing:0.081px;">Hegel Коробка разветвительная</div>
<div class="a t" style="left:655.2px;top:454.19px;font-size:11px;line-height:14px;color:#212121;letter-spacing:0.198px;">д/откр. монтажа с 7</div>
<div class="a t" style="left:655.2px;top:467.19px;font-size:11px;line-height:14px;color:#212121;letter-spacing:0.146px;">мембранными вводами, внутр</div>
<div class="a t" style="left:655.2px;top:480.19px;font-size:11px;line-height:14px;color:#212121;letter-spacing:0.033px;">размер 105*105*55, IP55, квадрат</div>
<div class="a t" style="left:855.2px;top:441.19px;font-size:11px;line-height:14px;color:#212121;letter-spacing:-0.069px;">шт</div>
<div class="a t" style="left:963.2px;top:441.19px;font-size:11px;line-height:14px;color:#212121;letter-spacing:-0.069px;">шт</div>
<div class="a t" style="left:1171.0px;top:441.19px;font-size:11px;line-height:14px;color:#212121;letter-spacing:-0.083px;">86,39</div>
<div class="a t" style="left:1279.0px;top:441.19px;font-size:11px;line-height:14px;color:#212121;letter-spacing:-0.083px;">20,00</div>
<div class="a t" style="left:1409.0px;top:441.19px;font-size:11px;line-height:14px;color:#212121;letter-spacing:-0.083px;">71,99</div>
<div class="a t" style="left:1456.2px;top:441.19px;font-size:11px;line-height:14px;color:#212121;letter-spacing:0.030px;">Октябрь 2025</div>
<div class="a t" style="left:1626.2px;top:441.19px;font-size:11px;line-height:14px;color:#212121;letter-spacing:-0.007px;">05.10.2025</div>
<div class="a t" style="left:70.21px;top:504.19px;font-size:11px;line-height:14px;color:#212121;letter-spacing:-0.153px;">1.2</div>
<svg class="a" style="left:47px;top:556px;" width="9" height="13" viewBox="0 0 9 13"><path d="M1.5 1L7 6.5L1.5 12" fill="none" stroke="#512DA8" stroke-width="1.4"/></svg>
<svg class="a" style="left:45px;top:507.4px;" width="13" height="10" viewBox="0 0 13 10"><rect x="4.2" y="0.5" width="4" height="2.4" rx="0.7" fill="#DD6A50"/><rect x="2.2" y="2.7" width="7.9" height="2.7" rx="0.8" fill="#E07A62"/><rect x="0.2" y="5.2" width="11.8" height="2.6" rx="0.8" fill="#DD6A50"/>
<path d="M5.4 3.6L6.4 2.2M4.4 4.6H5.8M7.4 4.4H8.6M3.4 6.4H4.6M6.4 6.4H7.6M9.2 6.2H10.2" stroke="#F2C4B6" stroke-width="0.7"/>
<path d="M0.9 8.2H12.1" stroke="#7C68BC" stroke-width="1.1"/></svg>
<div class="a t" style="left:105.2px;top:504.19px;font-size:11px;line-height:14px;color:#212121;letter-spacing:-0.101px;">ТЦ_20.2.08.09_25_2536320775</div>
<div class="a t" style="left:105.2px;top:517.19px;font-size:11px;line-height:14px;color:#212121;letter-spacing:-0.202px;">_22.10.2025_01_1.2</div>
<div class="a t" style="left:285.2px;top:504.19px;font-size:11px;line-height:14px;color:#212121;">20.2.08.09</div>
<div class="a t" style="left:455.2px;top:504.19px;font-size:11px;line-height:14px;color:#212121;letter-spacing:0.048px;">Коробка квадратная IP55, 105</div>
<div class="a t" style="left:455.2px;top:517.19px;font-size:11px;line-height:14px;color:#212121;letter-spacing:0.219px;">мм*105 мм*55 мм, 7 вводов</div>
<div class="a t" style="left:655.2px;top:504.19px;font-size:11px;line-height:14px;color:#212121;letter-spacing:-0.009px;">Коробка распределительная, ОП</div>
<div class="a t" style="left:655.2px;top:517.19px;font-size:11px;line-height:14px;color:#212121;letter-spacing:-0.100px;">105*105*55 IP 55 SchE IMT</div>
<div class="a t" style="left:855.2px;top:504.19px;font-size:11px;line-height:14px;color:#212121;letter-spacing:-0.069px;">шт</div>
<div class="a t" style="left:963.2px;top:504.19px;font-size:11px;line-height:14px;color:#212121;letter-spacing:-0.058px;">10 шт</div>
<div class="a t" style="left:1171.0px;top:504.19px;font-size:11px;line-height:14px;color:#212121;letter-spacing:-0.083px;">91,00</div>
<div class="a t" style="left:1285.02px;top:504.19px;font-size:11px;line-height:14px;color:#212121;letter-spacing:-0.080px;">0,00</div>
<div class="a t" style="left:1409.0px;top:504.19px;font-size:11px;line-height:14px;color:#212121;letter-spacing:-0.083px;">91,00</div>
<div class="a t" style="left:1456.2px;top:504.19px;font-size:11px;line-height:14px;color:#212121;letter-spacing:0.030px;">Октябрь 2025</div>
<div class="a t" style="left:1626.2px;top:504.19px;font-size:11px;line-height:14px;color:#212121;letter-spacing:-0.007px;">22.10.2025</div>
<div class="a t" style="left:70.41px;top:580.19px;font-size:11px;line-height:14px;color:#212121;font-weight:700;letter-spacing:-0.255px;">1.3</div>
<svg class="a" style="left:47px;top:619px;" width="9" height="13" viewBox="0 0 9 13"><path d="M1.5 1L7 6.5L1.5 12" fill="none" stroke="#512DA8" stroke-width="1.4"/></svg>
<svg class="a" style="left:45px;top:583.4px;" width="13" height="10" viewBox="0 0 13 10"><rect x="4.2" y="0.5" width="4" height="2.4" rx="0.7" fill="#DD6A50"/><rect x="2.2" y="2.7" width="7.9" height="2.7" rx="0.8" fill="#E07A62"/><rect x="0.2" y="5.2" width="11.8" height="2.6" rx="0.8" fill="#DD6A50"/>
<path d="M5.4 3.6L6.4 2.2M4.4 4.6H5.8M7.4 4.4H8.6M3.4 6.4H4.6M6.4 6.4H7.6M9.2 6.2H10.2" stroke="#F2C4B6" stroke-width="0.7"/>
<path d="M0.9 8.2H12.1" stroke="#7C68BC" stroke-width="1.1"/></svg>
<div class="a t" style="left:105.2px;top:580.19px;font-size:11px;line-height:14px;color:#212121;font-weight:700;letter-spacing:0.038px;">ТЦ_20.2.08.09_56_5610155445</div>
<div class="a t" style="left:105.2px;top:593.19px;font-size:11px;line-height:14px;color:#212121;font-weight:700;letter-spacing:-0.055px;">_20.10.2025_01_1.3</div>
<div class="a t" style="left:285.2px;top:580.19px;font-size:11px;line-height:14px;color:#212121;font-weight:700;letter-spacing:0.167px;">20.2.08.09</div>
<div class="a t" style="left:455.2px;top:580.19px;font-size:11px;line-height:14px;color:#212121;font-weight:700;letter-spacing:-0.116px;">Коробка квадратная IP55, 105</div>
<div class="a t" style="left:455.2px;top:593.19px;font-size:11px;line-height:14px;color:#212121;font-weight:700;letter-spacing:-0.033px;">мм*105 мм*55 мм, 7 вводов</div>
<div class="a t" style="left:655.2px;top:580.19px;font-size:11px;line-height:14px;color:#212121;font-weight:700;letter-spacing:-0.169px;">Hegel Коробка разветвительная</div>
<div class="a t" style="left:655.2px;top:593.19px;font-size:11px;line-height:14px;color:#212121;font-weight:700;letter-spacing:0.030px;">д/откр. монтажа с 7</div>
<div class="a t" style="left:655.2px;top:606.19px;font-size:11px;line-height:14px;color:#212121;font-weight:700;letter-spacing:-0.208px;">мембранными вводами, внутр</div>
<div class="a t" style="left:655.2px;top:619.19px;font-size:11px;line-height:14px;color:#212121;font-weight:700;letter-spacing:0.016px;">размер 105*105*55, IP55, квадрат</div>
<div class="a t" style="left:855.2px;top:580.19px;font-size:11px;line-height:14px;color:#212121;font-weight:700;letter-spacing:-0.364px;">шт</div>
<div class="a t" style="left:963.2px;top:580.19px;font-size:11px;line-height:14px;color:#212121;font-weight:700;letter-spacing:-0.364px;">шт</div>
<div class="a t" style="left:1166.53px;top:580.19px;font-size:11px;line-height:14px;color:#212121;font-weight:700;letter-spacing:-0.275px;">113,40</div>
<div class="a t" style="left:1279.77px;top:580.19px;font-size:11px;line-height:14px;color:#212121;font-weight:700;letter-spacing:-0.275px;">20,00</div>
<div class="a t" style="left:1409.77px;top:580.19px;font-size:11px;line-height:14px;color:#212121;font-weight:700;letter-spacing:-0.275px;">94,50</div>
<div class="a t" style="left:1456.2px;top:580.19px;font-size:11px;line-height:14px;color:#212121;font-weight:700;letter-spacing:-0.152px;">Октябрь 2025</div>
<div class="a t" style="left:1626.2px;top:580.19px;font-size:11px;line-height:14px;color:#212121;font-weight:700;letter-spacing:0.160px;">20.10.2025</div>
<div class="a" style="left:644px;top:501px;width:201px;height:75px;border:1px solid #000;box-sizing:border-box"></div>
<div class="a" style="left:1734px;top:230px;width:24px;height:1px;background:#D1C4E9"></div>
<div class="a t" style="left:0.2px;top:-12.33px;font-size:12.5px;line-height:16px;color:#111;left:1741px;top:175px;width:14px;writing-mode:vertical-rl;line-height:14px;letter-spacing:-0.05px">Расчет</div>
<div class="a" style="left:35px;top:998px;width:1698px;height:1px;background:#D1C4E9"></div>
<div class="a" style="left:35px;top:1004px;width:1723px;height:1px;background:#D1C4E9"></div>
<div class="a" style="left:644px;top:999px;width:1px;height:5px;background:#D1C4E9"></div>
<div class="a" style="left:645px;top:998px;width:340px;height:6.6px;background:#AA96D4;border-top:1px solid #8F79C8;border-radius:3.3px;box-sizing:border-box"></div>
<div class="a" style="left:1325px;top:1005px;width:1px;height:27px;background:#D1C4E9"></div>
<div class="a" style="left:234px;top:1005px;width:200px;height:30px;background:#FFECB3"></div>
<div class="a" style="left:234px;top:1005px;width:200px;height:3.8px;background:#FF9800"></div>
<div class="a t" style="left:82.7px;top:1010.15px;font-size:14px;line-height:18px;color:#424242;letter-spacing:-0.275px;">Подготовительны…</div>
<div class="a t" style="left:282.7px;top:1010.15px;font-size:14px;line-height:18px;color:#212121;font-weight:700;letter-spacing:-0.675px;">Конъюнктурный …</div>
<svg class="a" style="left:217px;top:1015px;" width="10" height="10" viewBox="0 0 10 10"><path d="M0.7 0.7L9.3 9.3M9.3 0.7L0.7 9.3" stroke="#111" stroke-width="1.5" fill="none"/></svg>
<svg class="a" style="left:417px;top:1015px;" width="10" height="10" viewBox="0 0 10 10"><path d="M0.7 0.7L9.3 9.3M9.3 0.7L0.7 9.3" stroke="#111" stroke-width="1.5" fill="none"/></svg>
<svg class="a" style="left:57px;top:1010px;" width="20" height="20" viewBox="0 0 20 20"><path d="M4 9.8V17.4M16 9.8V17.4M4 10.4H16" fill="none" stroke="#EDB95C" stroke-width="1.5"/>
<path d="M8 10.6V17.4M12 10.6V17.4M9.9 4.8L4.4 9.8M9.9 4.8L15.6 9.8" fill="none" stroke="#F3D29C" stroke-width="1.2"/>
<path d="M1.4 9.3L9.9 1.6L18.5 9.3" fill="none" stroke="#4A22A8" stroke-width="1.7"/>
<path d="M2 18.5H18" stroke="#757575" stroke-width="1.2"/></svg>
<svg class="a" style="left:257px;top:1011px;" width="20" height="18" viewBox="0 0 20 18"><path d="M1.1 11.3L3.5 9.1L7 12.7L4.8 15Z" fill="#E8B15F"/>
<rect x="6.4" y="5" width="4.4" height="4.5" rx="0.6" fill="#E8B15F"/><circle cx="9.5" cy="6.5" r="0.7" fill="#fff"/>
<circle cx="9.4" cy="6.7" r="4.8" fill="none" stroke="#4A22B0" stroke-width="1.7"/>
<path d="M12.8 10.2L18 15.7" stroke="#4A22B0" stroke-width="2.1" stroke-linecap="round"/></svg>
<div class="a" style="left:787px;top:564px;width:206px;height:277px;background:#fff;box-shadow:1px 2px 6px rgba(0,0,0,.32),0 0 2px rgba(0,0,0,.25)"></div>
<div class="a t" style="left:821.7px;top:573.19px;font-size:11px;line-height:14px;color:#212121;letter-spacing:0.166px;">Копировать в смету</div>
<div class="a t" style="left:821.7px;top:604.19px;font-size:11px;line-height:14px;color:#212121;letter-spacing:0.098px;">Применить цену поставщика</div>
<div class="a t" style="left:821.7px;top:628.19px;font-size:11px;line-height:14px;color:#212121;letter-spacing:0.082px;">Обновить цену поставщика</div>
<div class="a t" style="left:821.7px;top:659.19px;font-size:11px;line-height:14px;color:#212121;letter-spacing:0.097px;">Добавить материал</div>
<div class="a t" style="left:821.7px;top:683.19px;font-size:11px;line-height:14px;color:#212121;letter-spacing:0.123px;">Добавить оборудование</div>
<div class="a t" style="left:821.7px;top:707.19px;font-size:11px;line-height:14px;color:#212121;letter-spacing:0.266px;">Добавить позицию</div>
<div class="a t" style="left:821.7px;top:738.19px;font-size:11px;line-height:14px;color:#212121;letter-spacing:0.252px;">Копировать</div>
<div class="a t" style="left:821.7px;top:762.19px;font-size:11px;line-height:14px;color:#212121;letter-spacing:0.152px;">Вырезать</div>
<div class="a t" style="left:821.7px;top:786.19px;font-size:11px;line-height:14px;color:#212121;letter-spacing:0.123px;">Вставить</div>
<div class="a t" style="left:821.7px;top:817.19px;font-size:11px;line-height:14px;color:#212121;letter-spacing:0.083px;">Удалить</div>
<div class="a" style="left:787px;top:651px;width:206px;height:1px;background:#E0E0E0"></div>
<div class="a" style="left:787px;top:809px;width:206px;height:1px;background:#E0E0E0"></div>
<div class="a" style="left:785.5px;top:563.6px;width:209px;height:35.5px;border:3px solid #EC131E;box-sizing:border-box;border-radius:1.5px"></div>
<svg class="a" style="left:797.5px;top:574.5px;" width="14" height="14" viewBox="0 0 14 14"><path d="M0.8 0.8H5.6L7.4 2.6V9.8H0.8Z" fill="#E9B766" stroke="#C79A52" stroke-width="0.5"/>
<path d="M2 3H5M2 4.6H4.4M2 6.2H4.4" stroke="#fff" stroke-width="0.8"/>
<path d="M5.2 4.2Q5.2 3 6.4 3H10.6L13 5.4V12Q13 13 12 13H6.2Q5.2 13 5.2 12Z" fill="#FBFAFE" stroke="#B7A6E2" stroke-width="0.8"/>
<path d="M6.6 6.8H11.6M6.6 8.8H11.6M6.6 10.8H11.6" stroke="#512DA8" stroke-width="1.35"/><path d="M8.4 6.2V11.6" stroke="#FBFAFE" stroke-width="0.5"/></svg>
<svg class="a" style="left:797.5px;top:605.5px;" width="14" height="14" viewBox="0 0 14 14"><rect x="0.6" y="5.4" width="2.3" height="7" rx="0.5" fill="#512DA8"/><rect x="4.4" y="3.4" width="2.2" height="9" rx="0.5" fill="#512DA8"/><rect x="8.3" y="0.6" width="2.2" height="6" rx="0.5" fill="#512DA8"/>
<circle cx="9.6" cy="9.2" r="3.8" fill="#EDB452"/><path d="M8.6 11.6V7H10Q11.3 7 11.3 8.2Q11.3 9.4 10 9.4H8M8 10.5H10" fill="none" stroke="#512DA8" stroke-width="0.9"/></svg>
<svg class="a" style="left:797.5px;top:630.5px;" width="14" height="13" viewBox="0 0 14 13"><path d="M0.6 0.8H10.2Q11 0.8 11 1.6V7.8H0.6Z" fill="#512DA8"/><path d="M3.8 6.4L5 2.2H6.4Q7.4 2.2 7.2 3.2Q7 4.4 5.8 4.4H4.4" fill="none" stroke="#fff" stroke-width="0.9"/>
<circle cx="10.4" cy="8.4" r="3.4" fill="#D64B36"/><path d="M10.4 5.6V11.2M7.6 8.4H13.2" stroke="#fff" stroke-width="0.8"/><circle cx="10.4" cy="8.4" r="1.3" fill="#D64B36" stroke="#fff" stroke-width="0.6"/></svg>
<svg class="a" style="left:798px;top:663.6px;" width="13" height="10" viewBox="0 0 13 10"><rect x="4.2" y="0.5" width="4" height="2.4" rx="0.7" fill="#DD6A50"/><rect x="2.2" y="2.7" width="7.9" height="2.7" rx="0.8" fill="#E07A62"/><rect x="0.2" y="5.2" width="11.8" height="2.6" rx="0.8" fill="#DD6A50"/>
<path d="M5.4 3.6L6.4 2.2M4.4 4.6H5.8M7.4 4.4H8.6M3.4 6.4H4.6M6.4 6.4H7.6M9.2 6.2H10.2" stroke="#F2C4B6" stroke-width="0.7"/>
<path d="M0.9 8.2H12.1" stroke="#7C68BC" stroke-width="1.1"/></svg>
<svg class="a" style="left:797.5px;top:685.5px;" width="14" height="12" viewBox="0 0 14 12"><rect x="0.6" y="0.5" width="12.4" height="11.2" rx="1" fill="#E9B35C"/>
<rect x="5.2" y="0.5" width="3" height="1.6" fill="#5A4A66"/><rect x="9.4" y="1.6" width="2.4" height="2.6" fill="#8E6BBF"/>
<path d="M3.6 10V5.4M2.4 6.8L3.6 5.2L4.8 6.8M7.6 10V5.4M6.4 6.8L7.6 5.2L8.8 6.8M2 10H9.4" fill="none" stroke="#A67C3A" stroke-width="0.7"/></svg>
<svg class="a" style="left:797.5px;top:708.5px;" width="14" height="14" viewBox="0 0 14 14"><rect x="0.7" y="0.7" width="12.4" height="12.4" rx="1.6" fill="#fff" stroke="#8A8A94" stroke-width="0.8"/>
<path d="M1.6 2.2H7.8M1.6 8H7.8" stroke="#512DA8" stroke-width="1.1"/>
<path d="M3.6 4H7.8M3.6 5.6H7.8M3.6 9.8H7.8M3.6 11.4H7.8" stroke="#707070" stroke-width="0.9"/>
<path d="M10.4 1.8V10" stroke="#F2C078" stroke-width="1.6"/><path d="M8.8 9.6H12L10.4 11.8Z" fill="#F0A030"/></svg>
<svg class="a" style="left:797.6px;top:739.2px;" width="13.6" height="14" viewBox="0 0 34 35"><path d="M2.9 1.6H13.7L18.2 6.1V22.400000000000002Q18.2 23.6 17.0 23.6H2.9Q1.7 23.6 1.7 22.400000000000002V2.8Q1.7 1.6 2.9 1.6Z" fill="#fff" stroke="#757575" stroke-width="1"/><path d="M13.7 1.6V6.1H18.2" fill="none" stroke="#757575" stroke-width="0.8"/><path d="M5 10.3H12M5 14.2H12M5 18.1H12" stroke="#512DA8" stroke-width="2" stroke-linecap="round"/><path d="M13.7 8.5H26.0L31.0 13.5V31.3Q31.0 32.5 29.8 32.5H13.7Q12.5 32.5 12.5 31.3V9.7Q12.5 8.5 13.7 8.5Z" fill="#fff" stroke="#757575" stroke-width="1"/><path d="M26.0 8.5V13.5H31.0" fill="none" stroke="#757575" stroke-width="0.8"/><path d="M16.5 18H27.5M16.5 22.4H27.5M16.5 26.8H27.5" stroke="#512DA8" stroke-width="2.4" stroke-linecap="round"/></svg>
<svg class="a" style="left:798.2px;top:763.3px;" width="11.6" height="13.6" viewBox="2 0 30 36"><path d="M26.9 2.2L17 13.7L19.4 17.3Q24.8 9.8 26.9 2.2Z" fill="#757575"/>
<path d="M14.6 21.6L12 23.6" stroke="#757575" stroke-width="2"/>
<ellipse cx="8.7" cy="28.3" rx="3" ry="5.4" transform="rotate(43 8.7 28.3)" fill="none" stroke="#757575" stroke-width="1.9"/>
<path d="M3.9 1.8L17.6 17.3L20.4 22.4L18 24.2Q12 19.5 8.3 13.3Q5 7.5 3.9 1.8Z" fill="#512DA8"/>
<ellipse cx="22.5" cy="28.3" rx="3.1" ry="5.4" transform="rotate(-40 22.5 28.3)" fill="none" stroke="#512DA8" stroke-width="2"/></svg>
<svg class="a" style="left:797.4px;top:787px;" width="13.8" height="14.2" viewBox="0 0 34 35"><rect x="1" y="5" width="26" height="27.2" rx="2.5" fill="#E8B15F"/>
<path d="M6.5 4.5H21.5V6Q21.5 9 18.5 9H9.5Q6.5 9 6.5 6Z" fill="#fff"/>
<path d="M8.2 6.9Q7.6 4.2 10.4 3.9L11.3 3.8Q11.7 0.8 14 0.8Q16.3 0.8 16.7 3.8L17.6 3.9Q20.4 4.2 19.8 6.9Z" fill="#757575"/><circle cx="14" cy="2.9" r="0.75" fill="#fff"/><path d="M18.7 13H28.5L32.5 17V31.3Q32.5 32.5 31.3 32.5H18.7Q17.5 32.5 17.5 31.3V14.2Q17.5 13 18.7 13Z" fill="#fff" stroke="#757575" stroke-width="1"/><path d="M28.5 13V17H32.5" fill="none" stroke="#757575" stroke-width="0.8"/><path d="M20.5 21.5H29.5M20.5 25H29.5M20.5 28.5H29.5" stroke="#512DA8" stroke-width="1.9" stroke-linecap="round"/></svg>
<svg class="a" style="left:798.6px;top:818.3px;" width="12" height="14" viewBox="0 0 14 17"><path d="M5 1.2H9V2.2H5Z" fill="#CC4A30"/><rect x="1" y="1.6" width="12" height="2.2" rx="0.8" fill="#CC4A30"/>
<rect x="1.6" y="3.6" width="10.8" height="1" fill="#E59A88"/>
<path d="M2 4.5H12V14.4Q12 16 10.4 16H3.6Q2 16 2 14.4Z" fill="#CC4A30"/></svg>
<svg class="a" style="left:0px;top:1028px;" width="10" height="9" viewBox="0 0 10 9"><path d="M0 0V9H9A9 8.5 0 0 1 0 0Z" fill="#8d99a6"/><path d="M0.5 0A8.5 8 0 0 0 9 8.5" fill="none" stroke="#707070" stroke-width="1"/></svg>
<svg class="a" style="left:1749px;top:1028px;" width="10" height="9" viewBox="0 0 10 9"><path d="M10 0V9H1A9 8.5 0 0 0 10 0Z" fill="#8a8a8a"/><path d="M9.5 0A8.5 8 0 0 1 1 8.5" fill="none" stroke="#707070" stroke-width="1"/></svg>
<div class="a" style="left:0px;top:1036px;width:1759px;height:1px;background:linear-gradient(90deg,#707070 0,#707070 28px,#8fa3b8 40px,#2f5f9e 60px,#2f5f9e 700px,#808080 900px,#707070 100%)"></div>
</body></html>
